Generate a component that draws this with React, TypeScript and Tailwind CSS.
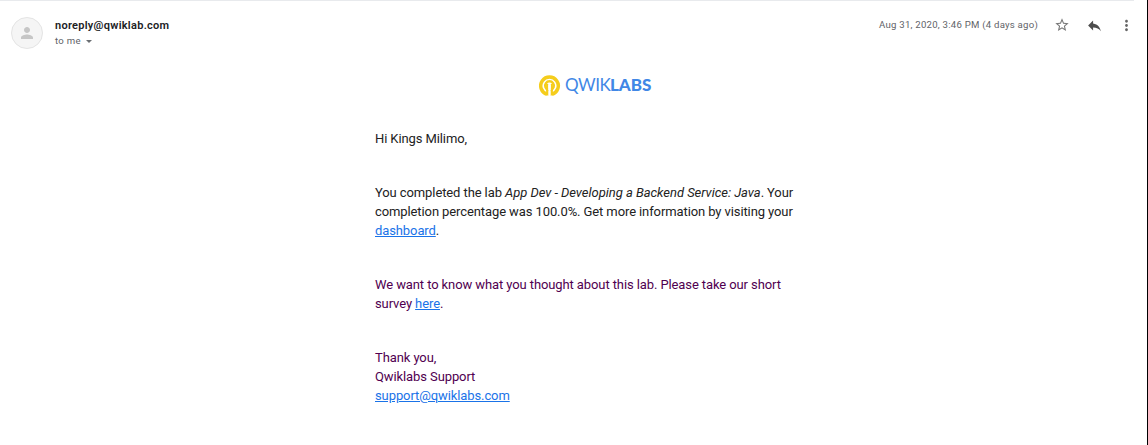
import { MdMoreVert, MdPerson, MdReply, MdStarOutline } from "react-icons/md";

function Logo() {
  return (
    <div className="flex h-[22px] items-center pl-[164px]">
      <svg width="22" height="22" viewBox="0 0 22 22" className="shrink-0">
        <path d="M7.2 16.7 A7 7 0 1 1 13.8 16.7" transform="translate(0 0.3)" fill="none" stroke="#fff" />
        <path d="M8 19.2 A8.8 8.8 0 1 1 13 19.2" fill="none" stroke="#f5cd1c" strokeWidth="3.5" />
        <path d="M9.3 14.8 A4.3 4.3 0 1 1 11.7 14.8" fill="none" stroke="#f5cd1c" strokeWidth="2.5" />
        <path d="M7.1 9h2.2v7H7.1zM11.7 9h2.2v7h-2.2z" fill="#f5cd1c" />
        <path d="M7.1 15.5h2.2v5.2l-2.2-.6zM11.7 15.5h2.2v4.6l-2.2.6z" fill="#f5cd1c" />
        <path d="M9.3 9.5h2.4v5.5H9.3z" fill="#fff" />
      </svg>
      <div className="relative -top-px ml-[4px] flex font-[Lato,sans-serif] text-[17px] leading-[22px] text-[#4187e6]">
        <span className="w-[45px] tracking-[-0.4px]">QWIK</span>
        <span className="font-black">LABS</span>
      </div>
    </div>
  );
}

function MessageHeader() {
  return (
    <header className="flex h-[74px] pt-[16px] pl-[11px]">
      <div className="flex size-8 items-center justify-center rounded-full border border-[#e4e4e4] bg-[#f5f5f5] text-[#c6c6c6]">
        <MdPerson size={18} />
      </div>
      <div className="ml-[12px]">
        <div className="text-[11px] leading-[17px] font-semibold tracking-[0.28px] text-[#202124]">noreply@qwiklab.com</div>
        <div className="flex items-center text-[9.6px] leading-[14px] tracking-[0.3px] text-[#5f6368]">
          to me
          <svg width="6" height="3" viewBox="0 0 6 3" className="ml-[5px]">
            <path d="M0 0h6L3 3z" fill="#6b6f73" />
          </svg>
        </div>
      </div>
      <div className="mr-[12px] ml-auto flex h-[16px] items-center text-[#5f6368]">
        <span className="text-[9.6px] tracking-[0.24px]">Aug 31, 2020, 3:46 PM (4 days ago)</span>
        <MdStarOutline size={16} className="ml-[16px] text-[#777]" />
        <MdReply size={17} className="ml-[16px] text-[#4d4d4d]" />
        <MdMoreVert size={17} className="ml-[15px] text-[#666]" />
      </div>
    </header>
  );
}

function Link({ children }: { children: string }) {
  return <a href="#" className="text-[#1a73e8] underline">{children}</a>;
}

export default function App() {
  return (
    <div className="flex h-[445px] w-[1148px] border-r border-black bg-white font-[Roboto,sans-serif]">
      <main className="w-full">
        <div className="mr-[13px] h-px bg-[#e8eaed]" />
        <MessageHeader />
        <article className="ml-[375px] w-[440px] text-[13px] leading-[19px] text-[#222]">
          <Logo />
          <div className="tracking-[-0.1px]">
            <p className="mt-[32px]">Hi Kings Milimo,</p>
            <p className="mt-[35px]">
              You completed the lab <em className="tracking-[-0.035px]">App Dev - Developing a Backend Service: Java</em>. Your<br />
              completion percentage was 100.0%. Get more information by visiting your<br />
              <Link>dashboard</Link>.
            </p>
            <p className="mt-[35px] text-[#500050]">
              We want to know what you thought about this lab. Please take our short<br />
              survey <Link>here</Link>.
            </p>
            <p className="mt-[35px] text-[#500050]">
              Thank you,<br />Qwiklabs Support<br /><Link>support@qwiklabs.com</Link>
            </p>
          </div>
        </article>
      </main>
    </div>
  );
}
